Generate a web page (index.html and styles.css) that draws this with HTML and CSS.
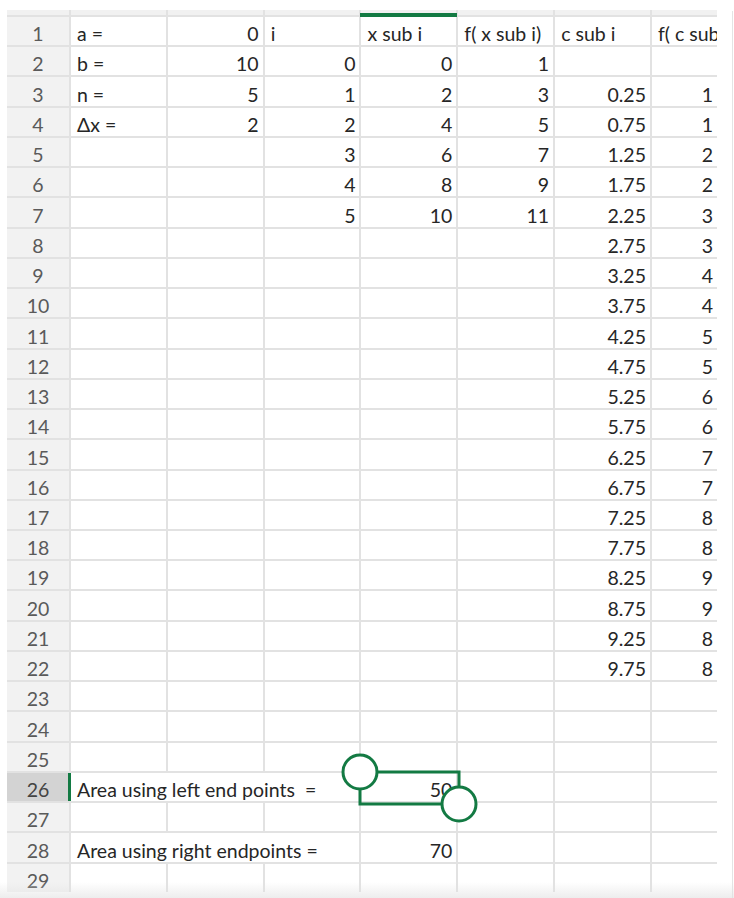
FILE: index.html
```html
<!DOCTYPE html>
<html>
<head>
<meta charset="utf-8">
<link rel="stylesheet" href="styles.css">
</head>
<body>
<div class="page">
  <div class="sheet">
    <div class="row hdr"><div class="h"></div><div class="h"></div><div class="h"></div><div class="h"></div><div class="h active"></div><div class="h"></div><div class="h"></div><div class="h"></div></div>
    <div class="row"><div class="rh">1</div><div class="c">a =</div><div class="c n">0</div><div class="c">i</div><div class="c">x sub i</div><div class="c">f( x sub i)</div><div class="c">c sub i</div><div class="c">f( c sub i)</div></div>
    <div class="row"><div class="rh">2</div><div class="c">b =</div><div class="c n">10</div><div class="c n">0</div><div class="c n">0</div><div class="c n">1</div><div class="c"></div><div class="c"></div></div>
    <div class="row"><div class="rh">3</div><div class="c">n =</div><div class="c n">5</div><div class="c n">1</div><div class="c n">2</div><div class="c n">3</div><div class="c n">0.25</div><div class="c n">1</div></div>
    <div class="row"><div class="rh">4</div><div class="c">Δx =</div><div class="c n">2</div><div class="c n">2</div><div class="c n">4</div><div class="c n">5</div><div class="c n">0.75</div><div class="c n">1</div></div>
    <div class="row"><div class="rh">5</div><div class="c"></div><div class="c"></div><div class="c n">3</div><div class="c n">6</div><div class="c n">7</div><div class="c n">1.25</div><div class="c n">2</div></div>
    <div class="row"><div class="rh">6</div><div class="c"></div><div class="c"></div><div class="c n">4</div><div class="c n">8</div><div class="c n">9</div><div class="c n">1.75</div><div class="c n">2</div></div>
    <div class="row"><div class="rh">7</div><div class="c"></div><div class="c"></div><div class="c n">5</div><div class="c n">10</div><div class="c n">11</div><div class="c n">2.25</div><div class="c n">3</div></div>
    <div class="row"><div class="rh">8</div><div class="c"></div><div class="c"></div><div class="c"></div><div class="c"></div><div class="c"></div><div class="c n">2.75</div><div class="c n">3</div></div>
    <div class="row"><div class="rh">9</div><div class="c"></div><div class="c"></div><div class="c"></div><div class="c"></div><div class="c"></div><div class="c n">3.25</div><div class="c n">4</div></div>
    <div class="row"><div class="rh">10</div><div class="c"></div><div class="c"></div><div class="c"></div><div class="c"></div><div class="c"></div><div class="c n">3.75</div><div class="c n">4</div></div>
    <div class="row"><div class="rh">11</div><div class="c"></div><div class="c"></div><div class="c"></div><div class="c"></div><div class="c"></div><div class="c n">4.25</div><div class="c n">5</div></div>
    <div class="row"><div class="rh">12</div><div class="c"></div><div class="c"></div><div class="c"></div><div class="c"></div><div class="c"></div><div class="c n">4.75</div><div class="c n">5</div></div>
    <div class="row"><div class="rh">13</div><div class="c"></div><div class="c"></div><div class="c"></div><div class="c"></div><div class="c"></div><div class="c n">5.25</div><div class="c n">6</div></div>
    <div class="row"><div class="rh">14</div><div class="c"></div><div class="c"></div><div class="c"></div><div class="c"></div><div class="c"></div><div class="c n">5.75</div><div class="c n">6</div></div>
    <div class="row"><div class="rh">15</div><div class="c"></div><div class="c"></div><div class="c"></div><div class="c"></div><div class="c"></div><div class="c n">6.25</div><div class="c n">7</div></div>
    <div class="row"><div class="rh">16</div><div class="c"></div><div class="c"></div><div class="c"></div><div class="c"></div><div class="c"></div><div class="c n">6.75</div><div class="c n">7</div></div>
    <div class="row"><div class="rh">17</div><div class="c"></div><div class="c"></div><div class="c"></div><div class="c"></div><div class="c"></div><div class="c n">7.25</div><div class="c n">8</div></div>
    <div class="row"><div class="rh">18</div><div class="c"></div><div class="c"></div><div class="c"></div><div class="c"></div><div class="c"></div><div class="c n">7.75</div><div class="c n">8</div></div>
    <div class="row"><div class="rh">19</div><div class="c"></div><div class="c"></div><div class="c"></div><div class="c"></div><div class="c"></div><div class="c n">8.25</div><div class="c n">9</div></div>
    <div class="row"><div class="rh">20</div><div class="c"></div><div class="c"></div><div class="c"></div><div class="c"></div><div class="c"></div><div class="c n">8.75</div><div class="c n">9</div></div>
    <div class="row"><div class="rh">21</div><div class="c"></div><div class="c"></div><div class="c"></div><div class="c"></div><div class="c"></div><div class="c n">9.25</div><div class="c n">8</div></div>
    <div class="row"><div class="rh">22</div><div class="c"></div><div class="c"></div><div class="c"></div><div class="c"></div><div class="c"></div><div class="c n">9.75</div><div class="c n">8</div></div>
    <div class="row"><div class="rh">23</div><div class="c"></div><div class="c"></div><div class="c"></div><div class="c"></div><div class="c"></div><div class="c"></div><div class="c"></div></div>
    <div class="row"><div class="rh">24</div><div class="c"></div><div class="c"></div><div class="c"></div><div class="c"></div><div class="c"></div><div class="c"></div><div class="c"></div></div>
    <div class="row"><div class="rh">25</div><div class="c"></div><div class="c"></div><div class="c"></div><div class="c"></div><div class="c"></div><div class="c"></div><div class="c"></div></div>
    <div class="row"><div class="rh rh-sel">26</div><div class="c span3">Area using left end points&nbsp; =</div><div class="c n selected">50<svg class="handles" width="142" height="76" viewBox="0 0 142 76"><rect x="21" y="21" width="99" height="32" fill="none" stroke="#137a43" stroke-width="3"/><circle cx="21" cy="21" r="17" fill="#fff" stroke="#137a43" stroke-width="3"/><circle cx="120" cy="53" r="17" fill="#fff" stroke="#137a43" stroke-width="3"/></svg></div><div class="c"></div><div class="c"></div><div class="c"></div></div>
    <div class="row"><div class="rh">27</div><div class="c"></div><div class="c"></div><div class="c"></div><div class="c"></div><div class="c"></div><div class="c"></div><div class="c"></div></div>
    <div class="row"><div class="rh">28</div><div class="c span3">Area using right endpoints =</div><div class="c n">70</div><div class="c"></div><div class="c"></div><div class="c"></div></div>
    <div class="row"><div class="rh">29</div><div class="c"></div><div class="c"></div><div class="c"></div><div class="c"></div><div class="c"></div><div class="c"></div><div class="c"></div></div>
  </div>
  <div class="edge"></div>
  <div class="fade"></div>
</div>
</body>
</html>
```

FILE: styles.css
```css
html, body {
  margin: 0;
  padding: 0;
  background: #ffffff;
}

body {
  font-family: Lato, "Liberation Sans", sans-serif;
  color: #262626;
}

.page {
  position: relative;
  display: flex;
  align-items: stretch;
  width: 734px;
  height: 898px;
  padding: 10px 0 0 7px;
  box-sizing: border-box;
  overflow: hidden;
}

.sheet {
  display: flex;
  flex-direction: column;
  gap: 2px;
  width: 710px;
  flex: 0 0 710px;
  background: #e2e2e2;
  align-self: flex-start;
}

.row {
  display: grid;
  grid-template-columns: 62px repeat(6, 94.83px) 65px;
  grid-auto-rows: 28.24px;
  column-gap: 2px;
}

.row.hdr {
  grid-auto-rows: 5px;
}

.h {
  background: #f1f1f1;
}

.h.active {
  position: relative;
  z-index: 1;
}

.h.active::after {
  content: "";
  position: absolute;
  left: -1px;
  right: -1px;
  top: 3px;
  height: 4px;
  background: #137a43;
}

.rh {
  background: #f2f2f2;
  color: #5a5a5a;
  font-size: 19.5px;
  display: flex;
  align-items: flex-end;
  justify-content: center;
  padding-bottom: 0;
  box-sizing: border-box;
  line-height: 22px;
}

.rh-sel {
  background: #d3d3d3;
  color: #444;
  position: relative;
}

.rh-sel::after {
  content: "";
  position: absolute;
  right: -2px;
  top: 0;
  bottom: 0;
  width: 3px;
  background: #137a43;
}

.c {
  background: #ffffff;
  font-size: 19.5px;
  line-height: 22px;
  display: flex;
  align-items: flex-end;
  padding: 0 4px 0 6px;
  box-sizing: border-box;
  white-space: nowrap;
  overflow: hidden;
}

.c.n {
  justify-content: flex-end;
}

.span3 {
  grid-column: span 3;
}

.selected {
  position: relative;
  overflow: visible;
  z-index: 2;
}

.handles {
  position: absolute;
  left: -22px;
  top: -22px;
  overflow: visible;
}

.edge {
  margin-left: 15px;
  width: 1px;
  background: #e4e4e4;
  margin-top: 1px;
}

.fade {
  position: absolute;
  left: 0;
  right: 0;
  bottom: 0;
  height: 16px;
  background: linear-gradient(to bottom, rgba(230,230,230,0), rgba(225,225,225,0.6));
}
```
